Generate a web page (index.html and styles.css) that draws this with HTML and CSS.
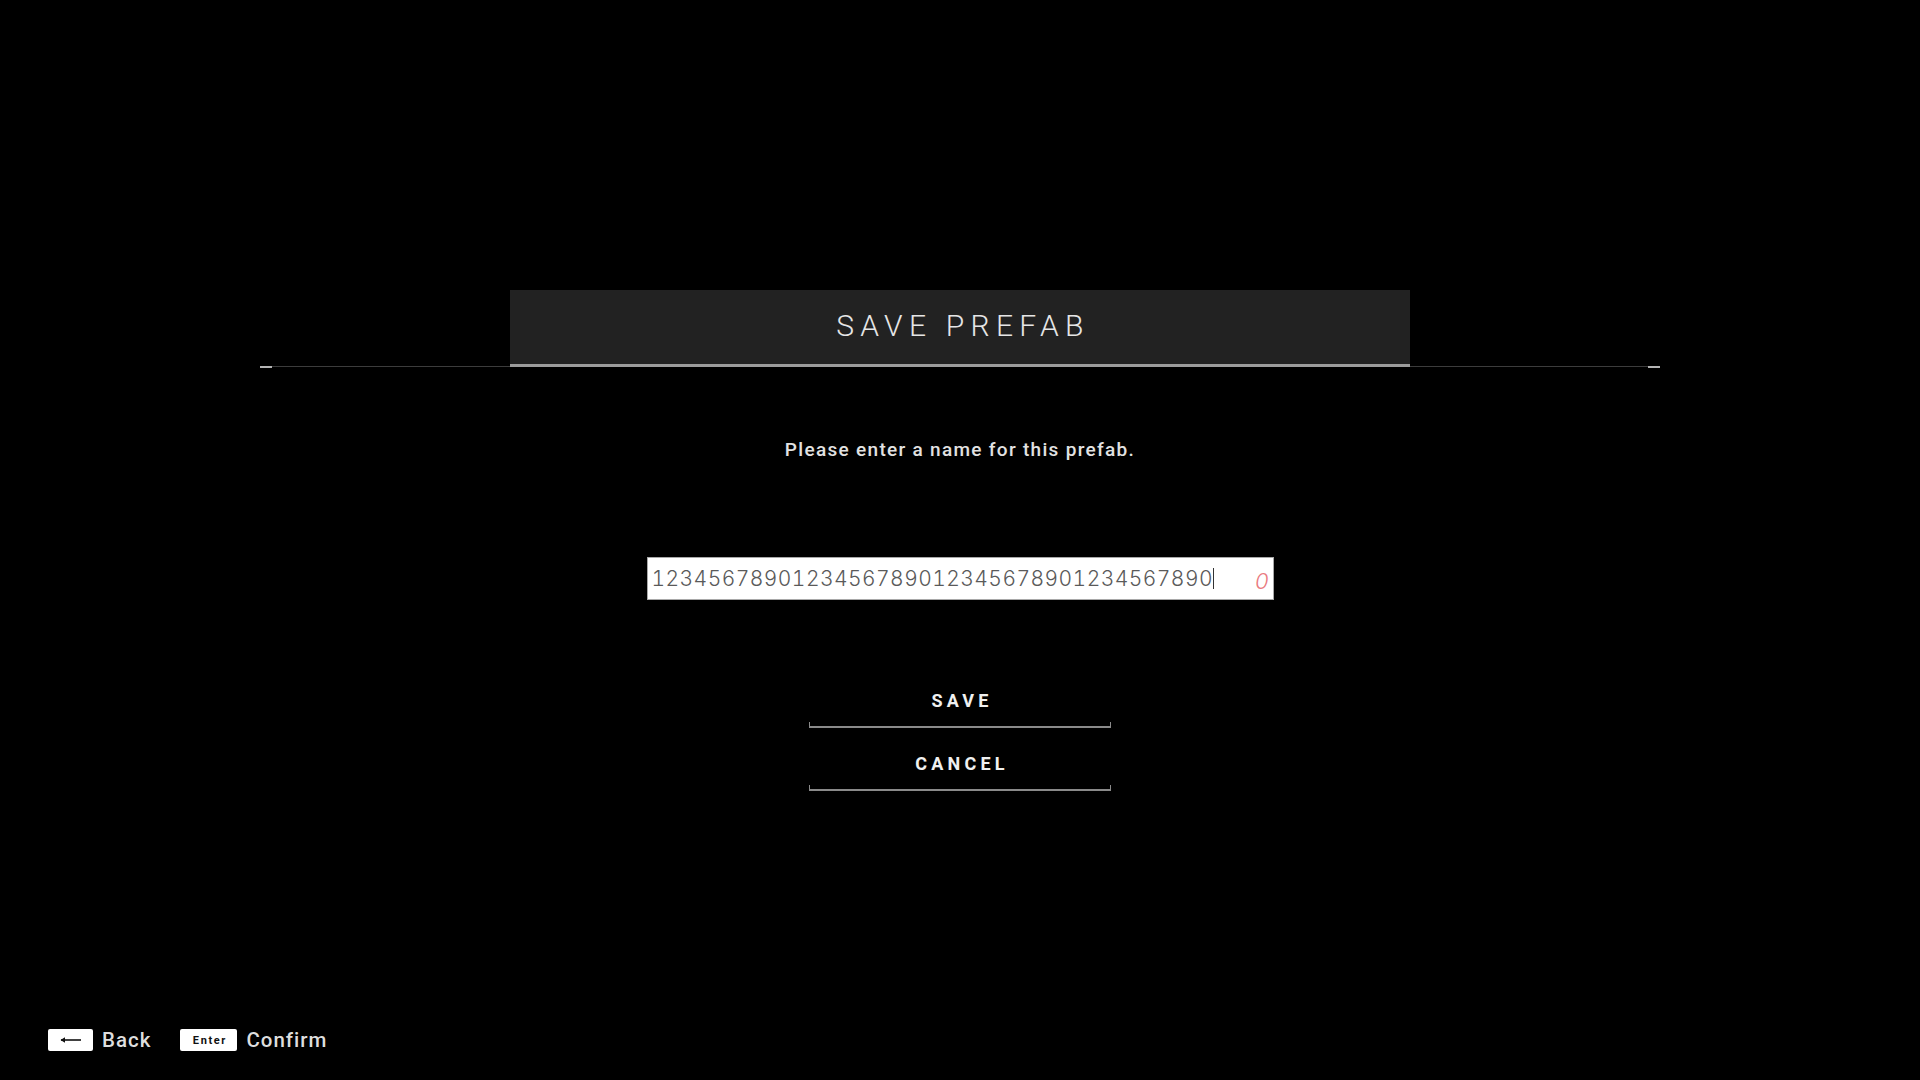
FILE: index.html
```html
<!DOCTYPE html>
<html lang="en">
<head>
<meta charset="utf-8">
<title>Save Prefab</title>
<link rel="stylesheet" href="styles.css">
</head>
<body>
<div class="screen">
  <main class="dialog">
    <header class="dialog-head">
      <div class="title-bar"><h1 class="title">SAVE PREFAB</h1></div>
    </header>
    <p class="message">Please enter a name for this prefab.</p>
    <div class="field">
      <span class="field-text">1234567890123456789012345678901234567890</span><span class="caret"></span>
      <span class="counter">0</span>
    </div>
    <div class="actions">
      <button class="action">SAVE</button>
      <button class="action">CANCEL</button>
    </div>
  </main>
  <footer class="hints">
    <div class="hint">
      <span class="key key-arrow"><svg width="22" height="8" viewBox="0 0 22 8"><path d="M1 4H21" stroke="#111" stroke-width="1.6"/><path d="M0.5 4L5 1.2V6.8Z" fill="#111"/></svg></span>
      <span class="hint-label">Back</span>
    </div>
    <div class="hint">
      <span class="key key-text">Enter</span>
      <span class="hint-label">Confirm</span>
    </div>
  </footer>
</div>
</body>
</html>
```

FILE: styles.css
```css
* { box-sizing: border-box; }
html, body { margin: 0; padding: 0; background: #000; }
body { font-family: "Roboto", "Liberation Sans", sans-serif; color: #dcdcdc; }

.screen {
  width: 1920px;
  height: 1080px;
  display: flex;
  flex-direction: column;
}

.dialog {
  display: flex;
  flex-direction: column;
  align-items: center;
  padding-top: 290px;
}

.dialog-head {
  position: relative;
  width: 1400px;
  border-bottom: 1px solid #3c3c3c;
  display: flex;
  justify-content: center;
}
.dialog-head::before,
.dialog-head::after {
  content: "";
  position: absolute;
  bottom: -2px;
  width: 12px;
  height: 2px;
  background: #b4b4b4;
}
.dialog-head::before { left: 0; }
.dialog-head::after { right: 0; }

.title-bar {
  width: 900px;
  height: 77px;
  background: #222222;
  border-bottom: 3px solid #9c9c9c;
  margin-bottom: -1px;
  display: flex;
  align-items: center;
  justify-content: center;
}
.title {
  margin: 0;
  padding-left: 6px;
  font-family: "Roboto", sans-serif;
  font-weight: 300;
  font-size: 30px;
  line-height: 36px;
  letter-spacing: 6.3px;
  color: #e6e6e6;
  padding-bottom: 2px;
}

.message {
  margin: 71px 0 0;
  font-family: "Roboto", sans-serif;
  font-weight: 500;
  font-size: 19px;
  line-height: 24px;
  letter-spacing: 1.3px;
  color: #e2e2e2;
}

.field {
  margin-top: 95px;
  width: 627px;
  height: 43px;
  background: #fff;
  border: 1px solid #a8a8a8;
  display: flex;
  align-items: center;
  padding-left: 4px;
  padding-right: 4px;
}
.field-text {
  font-family: "Inter", sans-serif;
  font-weight: 300;
  font-size: 21px;
  letter-spacing: 0.45px;
  font-variant-numeric: tabular-nums;
  color: #5a5a5a;
  white-space: nowrap;
}
.caret {
  width: 1px;
  height: 21px;
  background: #333;
  margin-left: 0;
}
.counter {
  margin-left: auto;
  font-family: "Inter", sans-serif;
  font-style: italic;
  font-weight: 300;
  font-size: 22px;
  color: #ea7a80;
  padding-top: 4px;
}

.actions {
  margin-top: 86px;
  display: flex;
  flex-direction: column;
  gap: 21px;
}
.action {
  position: relative;
  width: 302px;
  height: 42px;
  background: transparent;
  border: 0;
  border-bottom: 2px solid #8a8a8a;
  padding: 0 0 10px 4px;
  font-family: "Roboto", sans-serif;
  font-weight: 700;
  font-size: 18px;
  line-height: 30px;
  letter-spacing: 4.2px;
  color: #f0f0f0;
  display: flex;
  align-items: center;
  justify-content: center;
}
.action::before,
.action::after {
  content: "";
  position: absolute;
  bottom: 0;
  width: 1px;
  height: 4px;
  background: #8a8a8a;
}
.action::before { left: 0; }
.action::after { right: 0; }

.hints {
  margin-top: auto;
  padding: 0 0 28px 48px;
  display: flex;
  gap: 29px;
}
.hint {
  display: flex;
  align-items: center;
  gap: 9px;
}
.key {
  height: 22px;
  background: #fff;
  border-radius: 2px;
  display: flex;
  align-items: center;
  justify-content: center;
}
.key-arrow { width: 45px; }
.key-text {
  width: 57px;
  font-family: "Roboto", sans-serif;
  font-weight: 700;
  font-size: 11px;
  letter-spacing: 1.6px;
  color: #111;
  padding-left: 2px;
}
.hint-label {
  font-family: "Roboto", sans-serif;
  font-weight: 500;
  font-size: 20.5px;
  letter-spacing: 1px;
  color: #dedede;
}
```
